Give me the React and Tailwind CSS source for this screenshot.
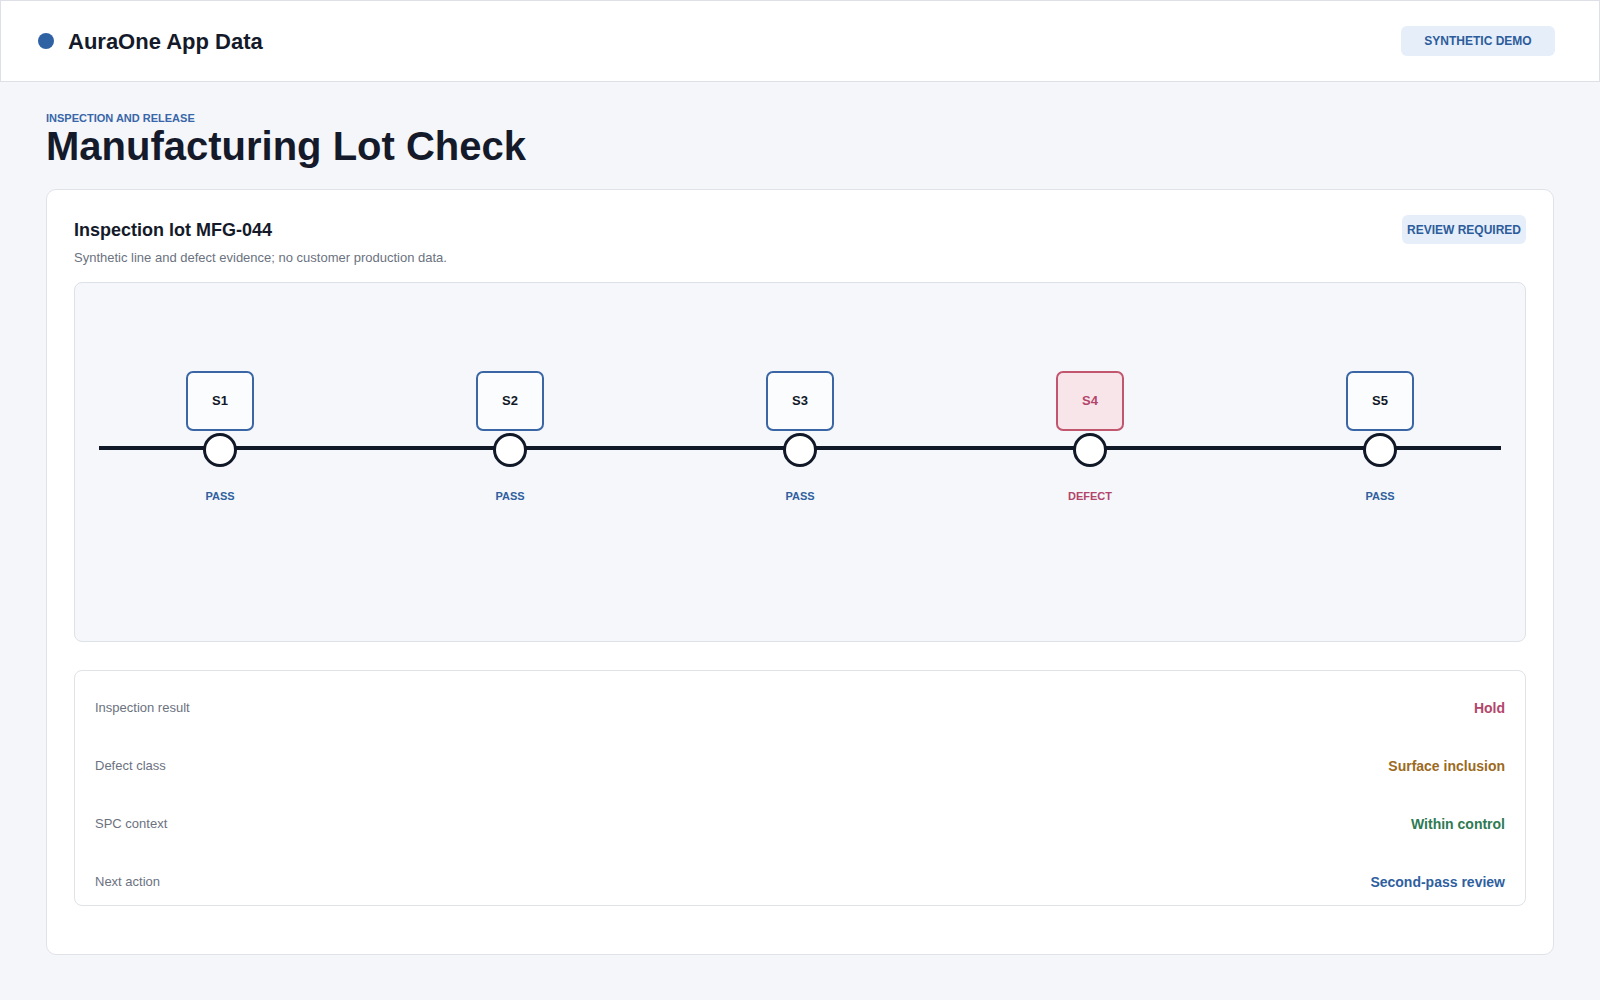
import React from 'react';

const stations = [
  { id: 'S1', status: 'PASS' },
  { id: 'S2', status: 'PASS' },
  { id: 'S3', status: 'PASS' },
  { id: 'S4', status: 'DEFECT' },
  { id: 'S5', status: 'PASS' },
];

const facts = [
  { label: 'Inspection result', value: 'Hold', tone: 'text-[#b3456b]' },
  { label: 'Defect class', value: 'Surface inclusion', tone: 'text-[#9b6a1e]' },
  { label: 'SPC context', value: 'Within control', tone: 'text-[#2e7a53]' },
  { label: 'Next action', value: 'Second-pass review', tone: 'text-[#2f5f9f]' },
];

function Station({ id, status }) {
  const defect = status === 'DEFECT';

  return (
    <div className="flex flex-col items-center">
      <div
        className={
          defect
            ? 'w-[68px] h-[60px] rounded-[7px] border-2 border-[#c2566f] bg-[#f8e5ea] flex items-center justify-center text-[13px] font-bold text-[#b3456b]'
            : 'w-[68px] h-[60px] rounded-[7px] border-2 border-[#3a66a5] bg-[#fbfcfe] flex items-center justify-center text-[13px] font-bold text-[#111827]'
        }
      >
        {id}
      </div>
      <div className="mt-[2px] w-[34px] h-[34px] rounded-full border-[3px] border-[#111827] bg-white" />
      <div
        className={
          defect
            ? 'mt-[21px] text-[11px] leading-4 font-bold text-[#b3456b]'
            : 'mt-[21px] text-[11px] leading-4 font-bold text-[#2f5f9f]'
        }
      >
        {status}
      </div>
    </div>
  );
}

export default function App() {
  return (
    <div className="min-h-screen bg-[#f4f6fa] font-['Liberation_Sans',Arial,sans-serif] text-[#111827]">
      {/* Top bar */}
      <header className="h-[82px] bg-white border border-[#dde1e7] flex items-center justify-between pl-[37px] pr-[44px]">
        <div className="flex items-center gap-[14px]">
          <span className="w-4 h-4 rounded-full bg-[#2f62a3]" />
          <span className="text-[22px] font-bold text-[#141a2a]">AuraOne App Data</span>
        </div>
        <span className="h-[30px] w-[154px] rounded-md bg-[#e5eef9] flex items-center justify-center text-[12px] font-bold text-[#2d5c9b]">
          SYNTHETIC DEMO
        </span>
      </header>

      <main className="px-[46px] pt-[28px] pb-10">
        <div className="text-[11px] leading-4 font-bold text-[#3866a8]">INSPECTION AND RELEASE</div>
        <h1 className="text-[40px] leading-[44px] font-bold text-[#141a2a] -mt-[2px]">Manufacturing Lot Check</h1>

        <section className="mt-[21px] bg-white border border-[#dfe3e8] rounded-[10px] px-[27px] pt-[24px] pb-[48px]">
          <div className="flex items-start justify-between">
            <div>
              <h2 className="pt-px text-[18px] leading-[30px] font-bold text-[#141a2a]">Inspection lot MFG-044</h2>
              <p className="mt-[3px] text-[13px] leading-5 text-[#6b7280]">
                Synthetic line and defect evidence; no customer production data.
              </p>
            </div>
            <span className="mt-px h-[29px] px-[5px] rounded-md bg-[#e5eef9] flex items-center text-[12px] font-bold text-[#2d5c9b]">
              REVIEW REQUIRED
            </span>
          </div>

          {/* Line trace */}
          <div className="relative mt-[14px] h-[360px] rounded-lg border border-[#dde2e8] bg-[#f5f7fa] pt-[88px]">
            <div className="absolute left-6 right-6 top-[163px] h-1 bg-[#111827]" />
            <div className="relative grid grid-cols-5">
              {stations.map((s) => (
                <Station key={s.id} id={s.id} status={s.status} />
              ))}
            </div>
          </div>

          <div className="mt-[28px] rounded-lg border border-[#dfe3e8] px-5 pt-[28px] pb-[14px] flex flex-col gap-[40px]">
            {facts.map((f) => (
              <div key={f.label} className="h-[18px] flex items-center justify-between">
                <span className="text-[13px] text-[#6b7280]">{f.label}</span>
                <span className={`text-[14px] font-bold ${f.tone}`}>{f.value}</span>
              </div>
            ))}
          </div>
        </section>
      </main>
    </div>
  );
}
